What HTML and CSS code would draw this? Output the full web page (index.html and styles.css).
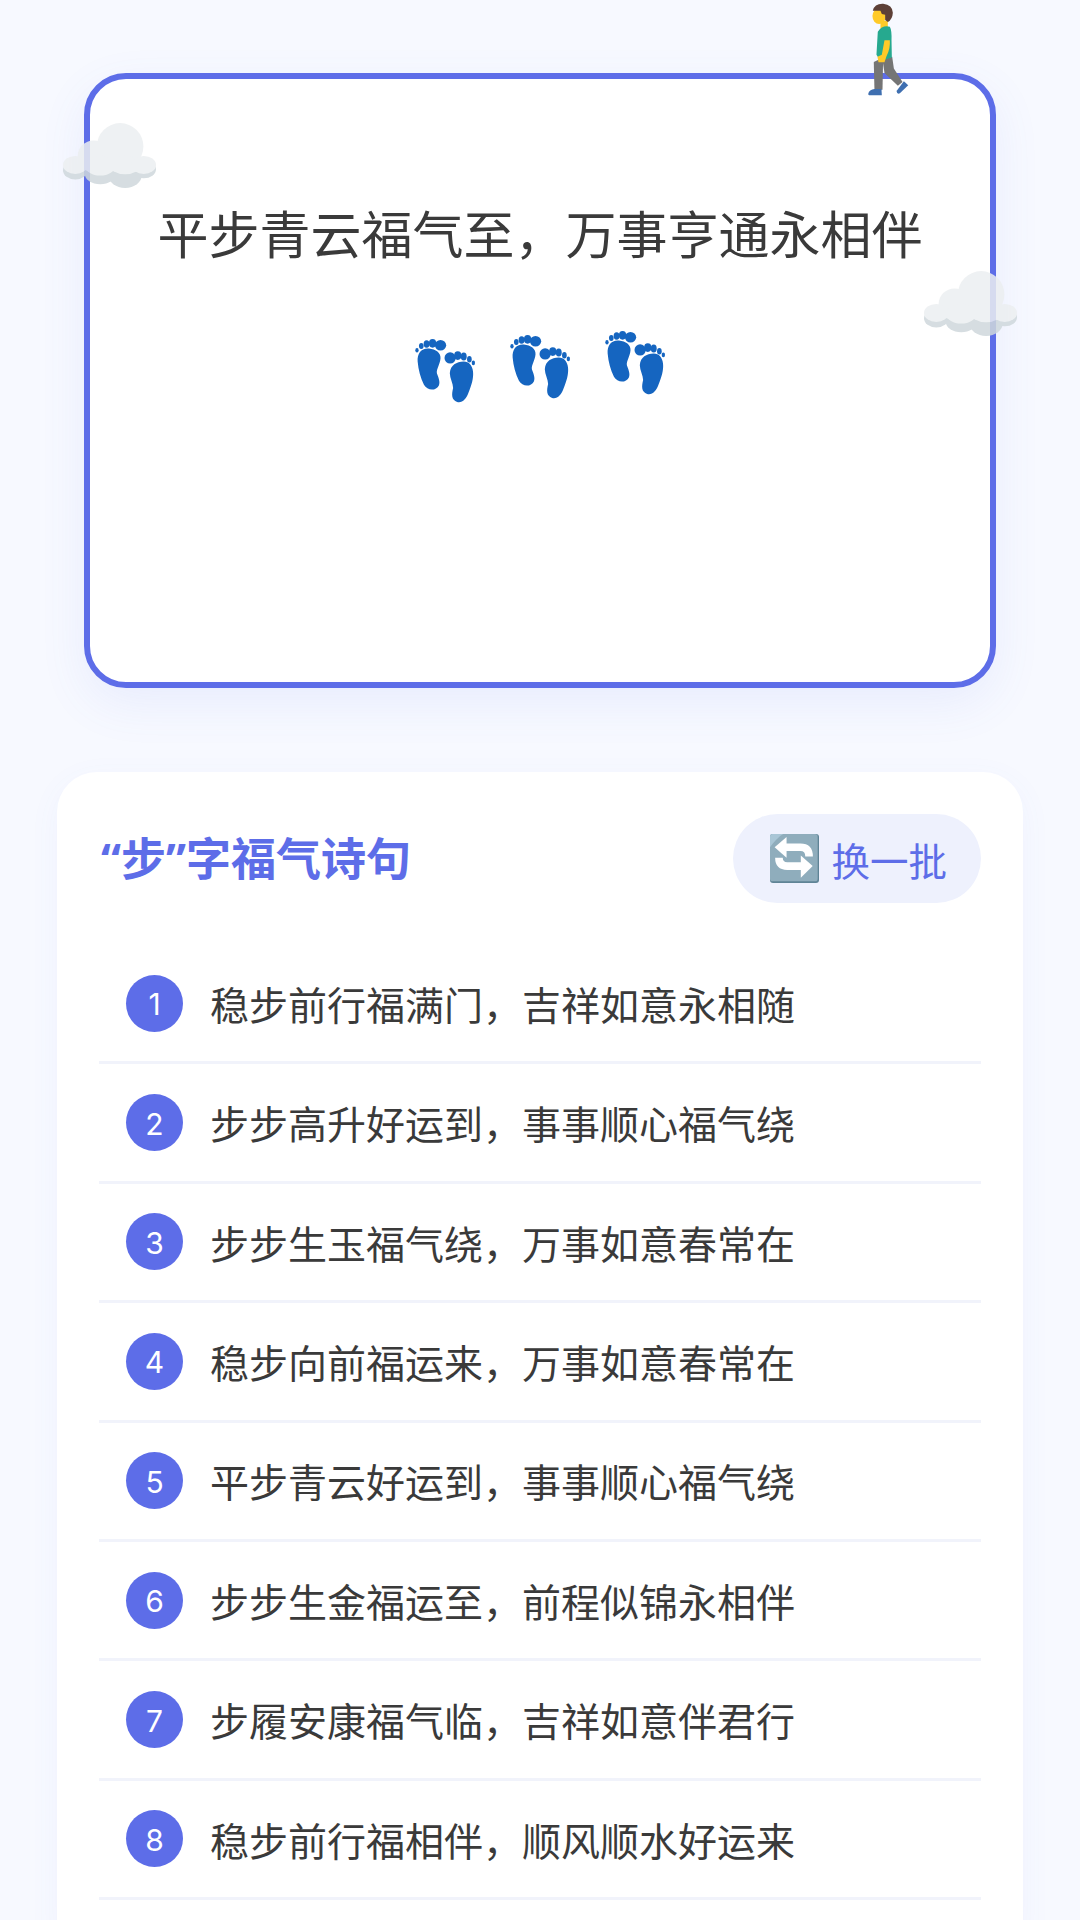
FILE: index.html
```html
<!DOCTYPE html>
<html lang="zh-CN">
<head>
    <meta charset="UTF-8">
    <meta name="viewport" content="width=device-width, initial-scale=1.0">
    <title>步字福气诗句</title>
    <link rel="stylesheet" href="styles.css">
</head>
<body>
    <svg class="defs" width="0" height="0" aria-hidden="true">
        <symbol id="cloud" viewBox="68 368 280 195">
            <g fill="#cfd8dc">
                <ellipse cx="105" cy="510" rx="37" ry="28"/>
                <ellipse cx="180" cy="522" rx="46" ry="30"/>
                <ellipse cx="255" cy="525" rx="50" ry="38"/>
                <ellipse cx="311" cy="507" rx="37" ry="27"/>
            </g>
            <g fill="#eceff1">
                <circle cx="240" cy="438" r="70"/>
                <circle cx="160" cy="468" r="48"/>
                <ellipse cx="105" cy="494" rx="37" ry="27"/>
                <ellipse cx="180" cy="496" rx="45" ry="30"/>
                <ellipse cx="255" cy="494" rx="48" ry="28"/>
                <ellipse cx="311" cy="494" rx="37" ry="27"/>
            </g>
        </symbol>
        <symbol id="feet" viewBox="40 55 190 200">
            <g fill="#1565c0">
                <path d="M85 86C63 84 49 100 51 125C53 150 60 175 70 195C80 214 107 214 115 197C120 185 113 172 109 160C107 148 118 135 120 115C121 99 106 88 85 86Z"/>
                <ellipse cx="120" cy="76" rx="17" ry="16"/>
                <ellipse cx="96" cy="70" rx="11" ry="13"/>
                <ellipse cx="78" cy="72" rx="9" ry="11"/>
                <ellipse cx="62" cy="78" rx="7" ry="9"/>
                <ellipse cx="49" cy="91" rx="5" ry="7"/>
                <path d="M190 125C168 126 150 135 148 160C148 175 158 190 158 205C153 225 153 241 170 247C186 251 197 238 204 220C214 195 220 175 218 155C216 137 206 125 190 125Z"/>
                <ellipse cx="149" cy="114" rx="17" ry="17"/>
                <ellipse cx="172" cy="107" rx="11" ry="13"/>
                <ellipse cx="190" cy="110" rx="9" ry="12"/>
                <ellipse cx="207" cy="118" rx="7" ry="10"/>
                <ellipse cx="219" cy="129" rx="5" ry="7"/>
            </g>
        </symbol>
    </svg>

    <div class="page">
        <div class="hero">
            <svg class="walker" viewBox="260 0 125 290">
                <path fill="#757575" d="M280 185L308 172L306 268L282 268Z"/>
                <path fill="#757575" d="M306 178L335 170L340 205L366 245L352 256L312 218Z"/>
                <path fill="#3f6fb0" d="M264 278Q268 268 282 266L303 266L304 285L266 285Q262 284 264 278Z"/>
                <path fill="#3f6fb0" d="M348 272L370 243L383 255L358 279Q350 284 348 272Z"/>
                <path fill="#ffca28" d="M300 62L322 62L322 90L300 92Z"/>
                <path fill="#26a98f" d="M292 95Q306 74 328 80Q334 90 333 120L334 172L300 182L288 164Z"/>
                <path fill="#ffca28" d="M312 120L328 120Q330 145 318 168L312 186L294 186L291 170L304 164Z"/>
                <ellipse fill="#ffca28" cx="296" cy="48" rx="20" ry="24"/>
                <path fill="#5d4037" d="M277 32Q282 10 308 11Q336 14 337 38Q336 58 322 66L314 60L314 44L304 42L300 32Z"/>
            </svg>
            <svg class="cloud cloud-left"><use href="#cloud"/></svg>
            <svg class="cloud cloud-right"><use href="#cloud"/></svg>
            <h1>平步青云福气至，万事亨通永相伴</h1>
            <div class="steps">
                <svg class="step step-1"><use href="#feet"/></svg>
                <svg class="step step-2"><use href="#feet"/></svg>
                <svg class="step step-3"><use href="#feet"/></svg>
            </div>
        </div>

        <div class="panel">
            <div class="panel-head">
                <h2><span class="quote">“</span>步<span class="quote">”</span>字福气诗句</h2>
                <button class="refresh-btn">
                    <svg class="refresh-icon" viewBox="0 0 148 148">
                        <rect width="148" height="148" rx="9" fill="#5f8496"/>
                        <rect width="144" height="143" rx="8" fill="#8fadbc"/>
                        <path d="M0 40V8Q0 0 8 0H40Q28 6 18 18Q8 28 0 40Z" fill="#a9c6d6"/>
                        <path d="M48 40H92Q118 40 118 68" fill="none" stroke="#fff" stroke-width="23"/>
                        <path d="M50 9V72L14 40Z" fill="#fff"/>
                        <path d="M95 97H52Q27 97 27 72" fill="none" stroke="#fff" stroke-width="23"/>
                        <path d="M93 65V132L129 97Z" fill="#fff"/>
                    </svg>
                    <span>换一批</span>
                </button>
            </div>
            <ul class="poem-list">
                <li class="poem"><span class="num">1</span><span class="line">稳步前行福满门，吉祥如意永相随</span></li>
                <li class="poem"><span class="num">2</span><span class="line">步步高升好运到，事事顺心福气绕</span></li>
                <li class="poem"><span class="num">3</span><span class="line">步步生玉福气绕，万事如意春常在</span></li>
                <li class="poem"><span class="num">4</span><span class="line">稳步向前福运来，万事如意春常在</span></li>
                <li class="poem"><span class="num">5</span><span class="line">平步青云好运到，事事顺心福气绕</span></li>
                <li class="poem"><span class="num">6</span><span class="line">步步生金福运至，前程似锦永相伴</span></li>
                <li class="poem"><span class="num">7</span><span class="line">步履安康福气临，吉祥如意伴君行</span></li>
                <li class="poem"><span class="num">8</span><span class="line">稳步前行福相伴，顺风顺水好运来</span></li>
            </ul>
        </div>
    </div>
</body>
</html>
```

FILE: styles.css
```css
* {
    box-sizing: border-box;
}

html, body {
    margin: 0;
    padding: 0;
}

body {
    background-color: #f7f9ff;
    font-family: "Noto Sans CJK SC", "Noto Sans", sans-serif;
    color: #3a3a3a;
}

.defs {
    display: block;
    height: 0;
}

.page {
    height: 1920px;
    overflow: hidden;
    padding: 73px 57px 0;
}

/* top card */
.hero {
    position: relative;
    height: 615px;
    margin: 0 27px 84px;
    padding-top: 117px;
    background-color: #fff;
    border: 6px solid #5d6de8;
    border-radius: 42px;
    box-shadow: 0 16px 48px rgba(93, 109, 232, 0.09);
    text-align: center;
}

.hero h1 {
    margin: 0;
    font-size: 51px;
    font-weight: 400;
    line-height: 72px;
    white-space: nowrap;
}

.steps {
    display: flex;
    justify-content: center;
    gap: 32px;
    margin-top: 62px;
}

.step {
    width: 63px;
    height: 67px;
}

.step-1 {
    margin-top: 8px;
}

.step-2 {
    margin-top: 4px;
}

.step-3 {
    margin-top: 0;
}

.walker {
    position: absolute;
    top: -79px;
    left: 777px;
    width: 42px;
    height: 97px;
}

.cloud {
    position: absolute;
    width: 93px;
    height: 65px;
    opacity: 0.85;
}

.cloud-left {
    top: 44px;
    left: -27px;
}

.cloud-right {
    top: 192px;
    left: 834px;
}

/* list panel */
.panel {
    padding: 42px 42px 60px;
    background-color: #fff;
    border-radius: 40px;
    box-shadow: 0 8px 32px rgba(93, 109, 232, 0.05);
}

.panel-head {
    display: flex;
    justify-content: space-between;
    align-items: center;
    margin-bottom: 42px;
}

.panel-head h2 {
    margin: 0 0 4px;
    padding-left: 2px;
    font-size: 45px;
    font-weight: 700;
    color: #5d6de8;
}

.quote {
    font-family: "Noto Sans", sans-serif;
}

.refresh-btn {
    display: flex;
    align-items: center;
    gap: 12px;
    height: 89px;
    padding: 0 34px 0 37px;
    background-color: #eef1fd;
    border: none;
    border-radius: 45px;
    color: #5d6de8;
    font-family: inherit;
    font-size: 38.5px;
    cursor: pointer;
}

.refresh-icon {
    width: 49px;
    height: 49px;
}

.poem-list {
    margin: 0;
    padding: 0;
    list-style: none;
}

.poem {
    display: flex;
    align-items: center;
    gap: 27px;
    height: 119.4px;
    padding: 0 27px;
    border-bottom: 3px solid #f1f3fb;
}

.num {
    display: flex;
    justify-content: center;
    align-items: center;
    width: 57px;
    height: 57px;
    padding-top: 2px;
    flex-shrink: 0;
    background-color: #5d6de8;
    border-radius: 50%;
    color: #fff;
    font-family: Inter, sans-serif;
    font-size: 30px;
    font-weight: 400;
}

.line {
    font-size: 39px;
    line-height: 1.4;
    white-space: nowrap;
}
```
